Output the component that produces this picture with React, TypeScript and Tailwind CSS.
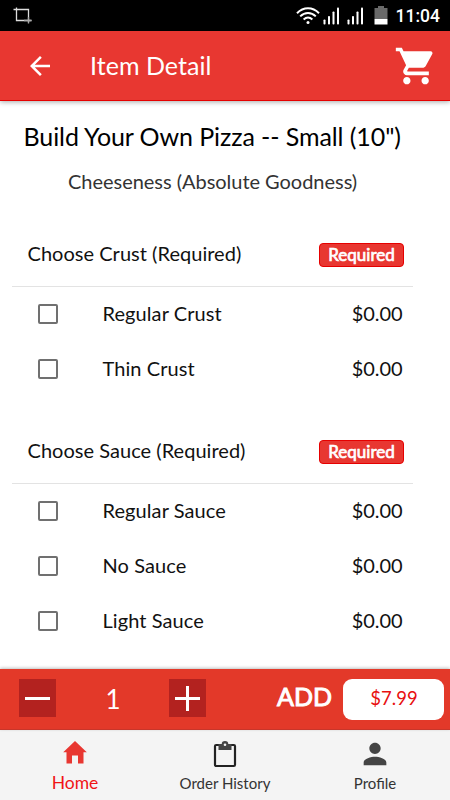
import { useState } from "react";
import { MdArrowBack, MdPerson, MdShoppingCart } from "react-icons/md";

const groups = [
  {
    title: "Choose Crust (Required)",
    options: ["Regular Crust", "Thin Crust"],
  },
  {
    title: "Choose Sauce (Required)",
    options: ["Regular Sauce", "No Sauce", "Light Sauce"],
  },
];

function SignalIcon() {
  return (
    <svg width="17" height="18" viewBox="0 0 17 18" fill="#fff">
      <rect x="0.5" y="12.5" width="2" height="5" rx="0.8" />
      <rect x="5" y="9" width="2" height="8.5" rx="0.8" />
      <rect x="9.5" y="4.5" width="2" height="13" rx="0.8" />
      <rect x="14" y="0.5" width="2" height="17" rx="0.8" />
    </svg>
  );
}

function StatusBar() {
  return (
    <div className="flex h-[31px] shrink-0 items-center bg-black pl-[13px] pr-[10px]">
      <svg width="19" height="17" viewBox="0 0 19 17" fill="none" strokeWidth="1.3">
        <path d="M0.5 2.5h15v13" stroke="#ddd" />
        <path d="M3.5 0.5v13h15" stroke="#ddd" />
        <path d="M15.5 10v6.5M11 13.5h7.5" stroke="#aaa" />
      </svg>
      <svg className="ml-auto" width="24" height="18" viewBox="0 0 24 18" fill="none" stroke="#fff" strokeWidth="2">
        <path d="M1 6.2C7.5-0.4 16.5-0.4 23 6.2" />
        <path d="M4.2 9.4c4.7-4.6 10.9-4.6 15.6 0" />
        <path d="M7.6 12.5c2.8-2.5 6-2.5 8.8 0" />
        <circle cx="12" cy="15.6" r="1.5" fill="#fff" stroke="none" />
      </svg>
      <span className="ml-[3px]">
        <SignalIcon />
      </span>
      <span className="ml-[7px]">
        <SignalIcon />
      </span>
      <svg className="ml-[10px]" width="14" height="19" viewBox="0 0 14 19">
        <path d="M0.5 2H4V0h6v2h3.5v11h-13z" fill="#696969" />
        <path d="M0.5 13h13v5.5h-13z" fill="#fff" />
      </svg>
      <span className="ml-[8px] mt-[2px] font-[Roboto,sans-serif] text-[17.5px] font-medium leading-none text-white">
        11:04
      </span>
    </div>
  );
}

function Header() {
  return (
    <header className="z-10 flex h-[70px] shrink-0 items-center border-b border-[#e60000] bg-[#e83731] pl-[25px] pr-[12px] text-white shadow-[0_1px_5px_rgba(0,0,0,0.35)]">
      <button aria-label="Back">
        <MdArrowBack size={30} />
      </button>
      <h1 className="ml-[35px] text-[25px] leading-none tracking-[0.05px]">Item Detail</h1>
      <button aria-label="Cart" className="ml-auto">
        <MdShoppingCart size={44} />
      </button>
    </header>
  );
}

function OptionRow({ label }: { label: string }) {
  const [checked, setChecked] = useState(false);

  return (
    <label className="flex h-[55px] items-center pl-[37.5px] text-[20px]">
      <input
        type="checkbox"
        checked={checked}
        onChange={() => setChecked(!checked)}
        className="mb-px size-[20px] appearance-none rounded-[2px] border-2 border-[#707070] checked:bg-[#e83731]"
      />
      <span className="ml-[45px] pb-[3px] tracking-[0.08px]">{label}</span>
      <span className="ml-auto pb-[3px] pr-[47.5px] tracking-[-0.05px]">$0.00</span>
    </label>
  );
}

function OptionGroup({ title, options }: { title: string; options: string[] }) {
  return (
    <section className="mb-[22px]">
      <div className="ml-[12px] mr-[37px] flex h-[65px] items-center border-b border-[#e3e3e3] pl-[15.5px] pr-[9px]">
        <h3 className="pb-[2px] text-[20px] tracking-[0.03px]">{title}</h3>
        <span className="ml-auto mt-[2px] flex h-[24px] w-[85px] items-center justify-center rounded-[4px] border border-[#e60000] bg-[#e83731] text-[17px] text-white [-webkit-text-stroke:0.7px_white]">
          Required
        </span>
      </div>
      {options.map((option) => (
        <OptionRow key={option} label={option} />
      ))}
    </section>
  );
}

function CartBar() {
  const [quantity, setQuantity] = useState(1);

  return (
    <div className="z-10 flex h-[61px] shrink-0 items-center border-b border-[#c8362a] bg-[#e33929] pl-[19px] pr-[6px] text-white shadow-[0_-1px_3px_rgba(0,0,0,0.25)]">
      <button
        aria-label="Decrease quantity"
        onClick={() => setQuantity(Math.max(1, quantity - 1))}
        className="mb-[2px] flex h-[38px] w-[37px] items-center justify-center bg-[#b3221f]"
      >
        <svg width="25" height="25" viewBox="0 0 25 25" stroke="#fff" strokeWidth="3">
          <path d="M0 12.5h25" />
        </svg>
      </button>
      <span className="w-[113px] pl-px text-center text-[26px]">{quantity}</span>
      <button
        aria-label="Increase quantity"
        onClick={() => setQuantity(quantity + 1)}
        className="mb-[2px] flex h-[38px] w-[37px] items-center justify-center bg-[#b3221f]"
      >
        <svg width="25" height="25" viewBox="0 0 25 25" stroke="#fff" strokeWidth="3">
          <path d="M0 12.5h25M12.5 0v25" />
        </svg>
      </button>
      <span className="ml-auto pb-[4px] text-[25px] [-webkit-text-stroke:1px_white]">ADD</span>
      <span className="ml-[11px] flex h-[41px] w-[101px] items-center justify-center rounded-[9px] bg-white pl-px text-[18.5px] text-[#e81010]">
        $7.99
      </span>
    </div>
  );
}

function TabBar() {
  return (
    <nav className="flex h-[70px] shrink-0 bg-[#f4f4f4] text-[#333]">
      <a className="flex flex-1 flex-col items-center pt-[11px] text-[#f01515]">
        <svg width="24" height="23" viewBox="0 0 24 23" fill="#e83731">
          <path d="M12 0L0.2 11.3H3.5V22.5H9V14.5H15V22.5H20.5V11.3H23.8z" />
        </svg>
        <span className="mt-[9px] text-[17.5px] leading-[20px]">Home</span>
      </a>
      <a className="flex flex-1 flex-col items-center pt-[10px]">
        <svg width="24" height="28" viewBox="0 0 24 28">
          <rect x="2" y="5" width="20" height="21" rx="1.2" fill="none" stroke="#222" strokeWidth="2.2" />
          <circle cx="12" cy="4.4" r="3.3" fill="#444" />
          <path d="M5.500 4h13v6h-13z" fill="#444" />
          <circle cx="12" cy="4.8" r="1.3" fill="#f4f4f4" />
        </svg>
        <span className="mt-[5px] text-[15px] leading-[20px]">Order History</span>
      </a>
      <a className="flex flex-1 flex-col items-center pt-[7px]">
        <MdPerson size={34} color="#444" />
        <span className="mt-[2px] text-[15px] leading-[20px]">Profile</span>
      </a>
    </nav>
  );
}

export default function App() {
  return (
    <div className="flex h-[800px] w-[450px] flex-col overflow-hidden bg-white font-[Lato,sans-serif] text-[#111]">
      <StatusBar />
      <Header />
      <main className="min-h-0 flex-1 overflow-hidden">
        <h2 className="pl-[23.5px] pt-[19px] text-[25px] leading-[32px] tracking-[-0.09px] text-black">
          Build Your Own Pizza -- Small (10")
        </h2>
        <p className="mb-[28px] mt-[16px] pl-[68px] text-[20px] leading-[26px] tracking-[-0.03px] text-[#333]">
          Cheeseness (Absolute Goodness)
        </p>
        {groups.map((group) => (
          <OptionGroup key={group.title} title={group.title} options={group.options} />
        ))}
      </main>
      <CartBar />
      <TabBar />
    </div>
  );
}
